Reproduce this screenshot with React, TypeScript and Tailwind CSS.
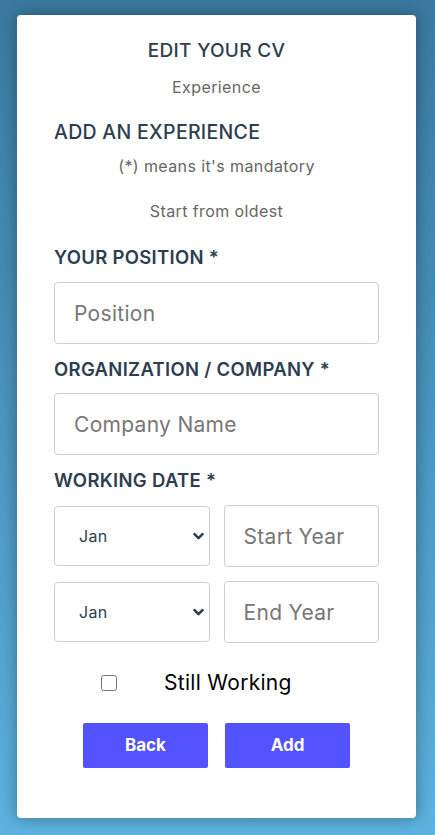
import { useState } from "react";

const MONTHS = ["Jan", "Feb", "Mar", "Apr", "May", "Jun", "Jul", "Aug", "Sep", "Oct", "Nov", "Dec"];

function MonthSelect() {
  return (
    <div className="relative h-[60px]">
      <select
        defaultValue="Jan"
        className="h-full w-full appearance-none rounded-[4px] border border-[#cfcfcf] bg-white pl-[24px] text-[16px] tracking-[0.3px] text-[#2c3e50] outline-none"
      >
        {MONTHS.map((m) => (
          <option key={m}>{m}</option>
        ))}
      </select>
      <svg
        className="pointer-events-none absolute right-[5px] top-1/2 h-[13px] w-[13px] -translate-y-1/2 text-[#2c3e50]"
        viewBox="0 0 12 12"
        fill="none"
        stroke="currentColor"
        strokeWidth="2.4"
        strokeLinecap="round"
        strokeLinejoin="round"
      >
        <path d="M2.3 4.3 6 8l3.7-3.7" />
      </svg>
    </div>
  );
}

function TextInput({ placeholder }: { placeholder: string }) {
  return (
    <input
      placeholder={placeholder}
      className="h-[62px] w-full rounded-[4px] border border-[#cfcfcf] bg-white px-[19px] text-[21px] tracking-[0.3px] text-[#2c3e50] outline-none placeholder:text-[#777]"
    />
  );
}

export default function App() {
  const [still, setStill] = useState(false);

  return (
    <div className="min-h-screen bg-linear-to-b from-[#3a79a0] to-[#5cb2df] px-[17px] pt-[15px] pb-[17px] font-['Inter',sans-serif]">
      <div className="w-[399px] rounded-[4px] bg-white px-[37px] pt-[24px] pb-[50px] shadow-[0_0_16px_rgba(0,0,0,0.35)]">
        <h1 className="text-center text-[19px] font-medium leading-[24px] tracking-[0.3px] text-[#2c3e50]">EDIT YOUR CV</h1>
        <p className="mt-[14px] text-center text-[16px] leading-[20px] tracking-[0.4px] text-[#666]">Experience</p>

        <h2 className="mt-[23px] text-[19.5px] font-medium leading-[24px] tracking-[0.3px] text-[#2c3e50]">ADD AN EXPERIENCE</h2>
        <p className="mt-[12px] text-center text-[16px] leading-[20px] tracking-[0.4px] text-[#666]">(*) means it's mandatory</p>
        <p className="mt-[25px] text-center text-[16px] leading-[20px] tracking-[0.4px] text-[#666]">Start from oldest</p>

        <label className="mt-[24px] block text-[18.5px] font-semibold leading-[24px] tracking-[0.3px] text-[#2c3e50]">YOUR POSITION *</label>
        <div className="mt-[13px]">
          <TextInput placeholder="Position" />
        </div>

        <label className="mt-[13px] block text-[18.5px] font-semibold leading-[24px] tracking-[0.3px] text-[#2c3e50]">ORGANIZATION / COMPANY *</label>
        <div className="mt-[12px]">
          <TextInput placeholder="Company Name" />
        </div>

        <label className="mt-[13px] block text-[18.5px] font-semibold leading-[24px] tracking-[0.3px] text-[#2c3e50]">WORKING DATE *</label>
        <div className="mt-[13px] grid grid-cols-2 items-center gap-x-[14px]">
          <MonthSelect />
          <TextInput placeholder="Start Year" />
        </div>
        <div className="mt-[14px] grid grid-cols-2 items-center gap-x-[14px]">
          <MonthSelect />
          <TextInput placeholder="End Year" />
        </div>

        <div className="mt-[28px] flex h-[24px] items-center pl-[47px]">
          <input
            type="checkbox"
            checked={still}
            onChange={(e) => setStill(e.target.checked)}
            className="h-[16px] w-[16px]"
          />
          <span className="ml-[47px] text-[21px] leading-[24px] tracking-[0.3px] text-black">Still Working</span>
        </div>

        <div className="mt-[28px] flex justify-center gap-[17px]">
          <button className="h-[45px] w-[125px] rounded-[2px] bg-[#5252ff] text-[17px] font-bold text-white">Back</button>
          <button className="h-[45px] w-[125px] rounded-[2px] bg-[#5252ff] text-[17px] font-bold text-white">Add</button>
        </div>
      </div>
    </div>
  );
}
